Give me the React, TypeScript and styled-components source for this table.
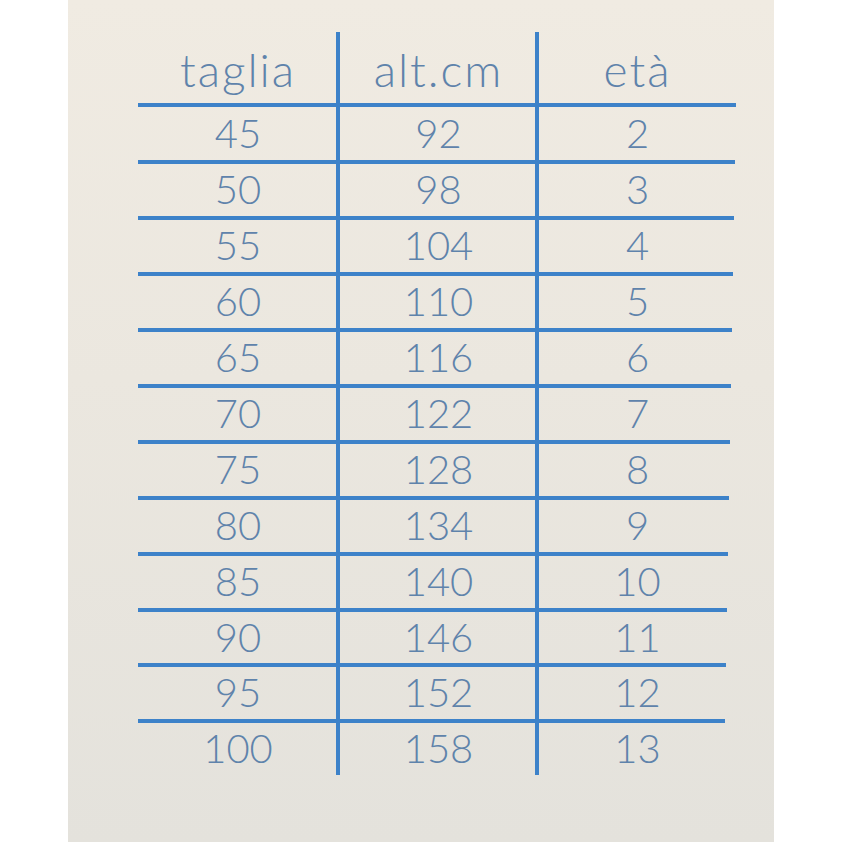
import styled, { createGlobalStyle } from 'styled-components';

// 사이즈표 데이터
const rows: [string, string, string][] = [
  ['45', '92', '2'],
  ['50', '98', '3'],
  ['55', '104', '4'],
  ['60', '110', '5'],
  ['65', '116', '6'],
  ['70', '122', '7'],
  ['75', '128', '8'],
  ['80', '134', '9'],
  ['85', '140', '10'],
  ['90', '146', '11'],
  ['95', '152', '12'],
  ['100', '158', '13'],
];

const headers = ['taglia', 'alt.cm', 'età'];

export default function App() {
  return (
    <Page>
      <GlobalStyle />
      <Paper>
        <Table>
          {headers.map((h, i) => (
            <HeadCell key={h} $col={i}>
              {h}
            </HeadCell>
          ))}
          {rows.map((r, ri) =>
            r.map((v, ci) => (
              <Cell
                key={`${ri}-${ci}`}
                $col={ci}
                $last={ri === rows.length - 1}
                $trim={ci === 2 ? ri + 1 : 0}
              >
                {v}
              </Cell>
            )),
          )}
        </Table>
      </Paper>
    </Page>
  );
}

const GlobalStyle = createGlobalStyle`
  html, body {
    margin: 0;
    padding: 0;
    background: #ffffff;
  }
`;

const LINE = '#3d82c9';

const Page = styled.div`
  width: 842px;
  height: 842px;
  background: #ffffff;
  display: flex;
  overflow: hidden;
`;

const Paper = styled.div`
  margin-left: 68px;
  width: 706px;
  height: 842px;
  background: linear-gradient(180deg, #f0ebe2 0%, #ebe7df 45%, #e4e2dc 100%);
  padding: 32px 0 0 70px;
  box-sizing: border-box;
`;

const Table = styled.div`
  display: grid;
  grid-template-columns: 200px 199px 199px;
  grid-template-rows: 75px 57px repeat(8, 56px) 55px 56px 52px;
  width: 598px;
  font-family: 'Lato', 'Open Sans', sans-serif;
  font-weight: 300;
`;

const BaseCell = styled.div<{ $col: number }>`
  display: flex;
  align-items: center;
  justify-content: center;
  color: #5f83ab;
  box-sizing: border-box;
  border-left: ${(p) => (p.$col > 0 ? `4px solid ${LINE}` : 'none')};
  margin-left: ${(p) => (p.$col > 0 ? '-2px' : '0')};
`;

const HeadCell = styled(BaseCell)`
  font-size: 46px;
  letter-spacing: 2px;
  border-bottom: 4px solid ${LINE};
  padding-top: 4px;
`;

const Cell = styled(BaseCell)<{ $last: boolean; $trim: number }>`
  font-size: 40px;
  border-bottom: ${(p) => (p.$last ? 'none' : `4px solid ${LINE}`)};
  padding-bottom: 2px;
  margin-right: ${(p) => p.$trim}px;
  padding-left: ${(p) => p.$trim}px;
`;
